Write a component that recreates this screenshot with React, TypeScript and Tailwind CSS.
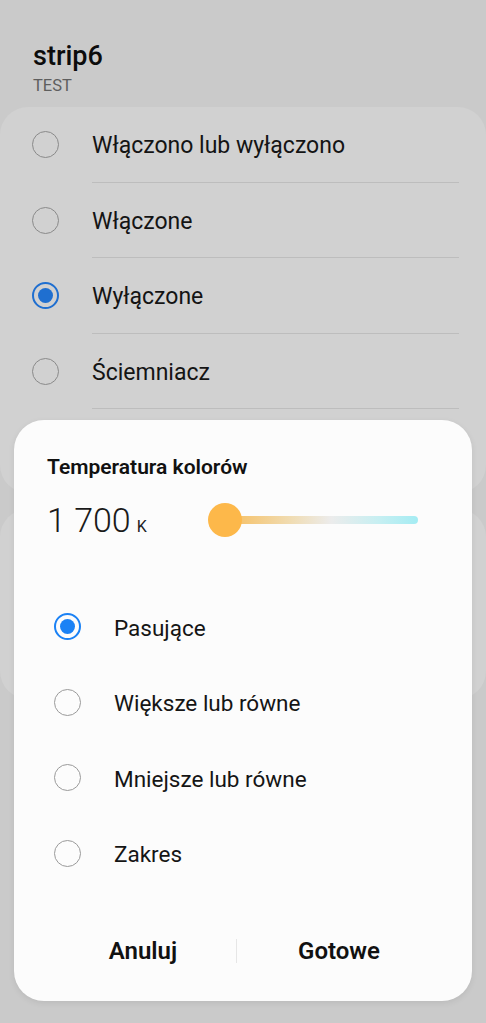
import { FC } from "react";

const modes = ["Włączono lub wyłączono", "Włączone", "Wyłączone", "Ściemniacz"];
const conditions = ["Pasujące", "Większe lub równe", "Mniejsze lub równe", "Zakres"];

const Radio: FC<{ on: boolean; dim?: boolean }> = ({ on, dim }) => {
  if (on) {
    return (
      <span
        className={`flex h-[27px] w-[27px] shrink-0 items-center justify-center rounded-full border-2 ${
          dim ? "border-[#1f6fd0]" : "border-[#1b82f5]"
        }`}
      >
        <span className={`h-[15px] w-[15px] rounded-full ${dim ? "bg-[#1f6fd0]" : "bg-[#1b82f5]"}`} />
      </span>
    );
  }
  return (
    <span
      className={`h-[27px] w-[27px] shrink-0 rounded-full border-[1.5px] ${
        dim ? "border-[#8a8a8a]" : "border-[#9a9a9a]"
      }`}
    />
  );
};

export default function App() {
  return (
    <div
      className="relative h-[1023px] w-full overflow-hidden bg-[#cacaca] text-[#111]"
      style={{ fontFamily: "Roboto, 'Noto Sans', sans-serif" }}
    >
      {/* dimmed page behind the dialog */}
      <div className="px-[33px] pt-[40px]">
        <p className="text-[27px] font-medium leading-[32px] text-[#0c0c0c]">strip6</p>
        <p className="mt-[4px] text-[16.5px] leading-[20px] text-[#5e5e5e]">TEST</p>
      </div>

      <div className="mt-[11px] h-[386px] rounded-[28px] bg-[#d1d1d1]">
        {modes.map((m, i) => (
          <div key={m} className="flex h-[75.5px] items-center pl-[32px]">
            <Radio on={i === 2} dim />
            <div className="ml-[33px] mr-[27px] flex h-full flex-1 items-center border-b border-[#bdbdbd]">
              <span className="mt-[4px] text-[23px] text-[#141414]">{m}</span>
            </div>
          </div>
        ))}
      </div>
      <div className="mt-[16px] h-[190px] rounded-[28px] bg-[#d1d1d1]" />

      {/* dialog */}
      <div className="absolute left-[14px] top-[420px] flex h-[581px] w-[458px] flex-col rounded-[30px] bg-[#fcfcfc] shadow-[0_2px_6px_rgba(0,0,0,0.08)]">
        <p className="px-[33px] pt-[34px] text-[21px] font-semibold leading-[26px] text-[#111]">
          Temperatura kolorów
        </p>
        <div className="mt-[21px] flex items-center pl-[33px]">
          <div className="flex w-[161px] items-baseline">
            <span className="text-[34px] font-light leading-[38px] text-[#1a1a1a]">1 700</span>
            <span className="ml-[6px] text-[16px] text-[#222]">K</span>
          </div>
          <div className="relative flex h-[34px] w-[210px] items-center">
            <div className="ml-[17px] h-[8px] flex-1 rounded-full bg-[linear-gradient(to_right,#f7bd5c,#f0ddb5_35%,#ececec_55%,#c6eff2_80%,#a4ecf3)]" />
            <span className="absolute left-0 top-0 h-[34px] w-[34px] rounded-full bg-[#fdb84a]" />
          </div>
        </div>

        <div className="mt-[50px] px-[40px]">
          {conditions.map((c, i) => (
            <div key={c} className="flex h-[75.5px] items-center">
              <Radio on={i === 0} />
              <span className="ml-[33px] mt-[4px] text-[22.5px] text-[#151515]">{c}</span>
            </div>
          ))}
        </div>

        <div className="mt-auto mb-[20px] flex h-[60px] items-center pl-[36px]">
          <button className="w-[186px] text-center text-[24px] font-semibold text-[#111]">Anuluj</button>
          <span className="h-[24px] w-px bg-[#e6e6e6]" />
          <button className="w-[204px] text-center text-[24px] font-semibold text-[#111]">Gotowe</button>
        </div>
      </div>
    </div>
  );
}
